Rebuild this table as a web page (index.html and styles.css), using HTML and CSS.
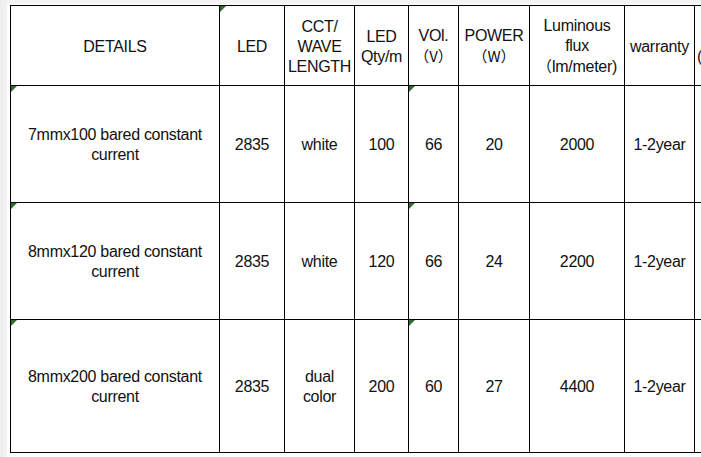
FILE: index.html
```html
<!DOCTYPE html>
<html>
<head>
<meta charset="utf-8">
<link rel="stylesheet" href="styles.css">
</head>
<body>
<div class="sheet">
  <table class="grid">
    <colgroup>
      <col class="c1"><col class="c2"><col class="c3"><col class="c4"><col class="c5"><col class="c6"><col class="c7"><col class="c8"><col class="c9">
    </colgroup>
    <tr class="head">
      <td>DETAILS</td>
      <td class="mark">LED</td>
      <td>CCT/<br>WAVE<br>LENGTH</td>
      <td>LED<br>Qty/m</td>
      <td>VOl.<br><span class="cjk">（V）</span></td>
      <td>POWER<br><span class="cjk">（W）</span></td>
      <td>Luminous<br>flux<br><span class="cjk">（</span>lm/meter)</td>
      <td>warranty</td>
      <td class="cut">&nbsp;<br>(</td>
    </tr>
    <tr class="r1">
      <td class="mark">7mmx100 bared constant current</td>
      <td>2835</td>
      <td>white</td>
      <td>100</td>
      <td class="mark">66</td>
      <td>20</td>
      <td>2000</td>
      <td>1-2year</td>
      <td></td>
    </tr>
    <tr class="r2">
      <td class="mark">8mmx120 bared constant current</td>
      <td>2835</td>
      <td>white</td>
      <td>120</td>
      <td class="mark">66</td>
      <td>24</td>
      <td>2200</td>
      <td>1-2year</td>
      <td></td>
    </tr>
    <tr class="r3">
      <td class="mark">8mmx200 bared constant current</td>
      <td>2835</td>
      <td>dual<br>color</td>
      <td>200</td>
      <td class="mark">60</td>
      <td>27</td>
      <td>4400</td>
      <td>1-2year</td>
      <td></td>
    </tr>
  </table>
</div>
</body>
</html>
```

FILE: styles.css
```css
html, body {
  margin: 0;
  padding: 0;
  background: #ffffff;
}

body {
  width: 701px;
  height: 457px;
  overflow: hidden;
}

.sheet {
  height: 457px;
  padding: 5px 0 0 10px;
  box-sizing: border-box;
  overflow: hidden;
  background:
    linear-gradient(to right, #eeeeee 0, #f2f2f2 7px, transparent 7px),
    linear-gradient(to bottom, #f4f4f4 0, #f4f4f4 4px, #ffffff 4px);
}

.grid {
  border-collapse: collapse;
  table-layout: fixed;
  width: 724px;
  font-family: "Liberation Sans", Arial, "Noto Sans CJK SC", sans-serif;
  font-size: 16px;
  line-height: 20px;
  color: #111111;
}

.grid td {
  border: 1px solid #000000;
  text-align: center;
  vertical-align: middle;
  padding: 2px 2px 0;
  position: relative;
  letter-spacing: -0.3px;
  white-space: normal;
}

.c1 { width: 209px; }
.c2 { width: 65px; }
.c3 { width: 70px; }
.c4 { width: 54px; }
.c5 { width: 50px; }
.c6 { width: 71px; }
.c7 { width: 95px; }
.c8 { width: 70px; }
.c9 { width: 40px; }

.head { height: 80px; }
.r1 { height: 117px; }
.r2 { height: 117px; }
.r3 { height: 133px; }

.grid tr.r1 td:first-child,
.grid tr.r2 td:first-child,
.grid tr.r3 td:first-child {
  padding: 2px 12px 0;
}

.cjk {
  font-family: "Noto Sans CJK SC", sans-serif;
  font-size: 15px;
  letter-spacing: 0;
}

.grid td.cut {
  text-align: left;
  padding-left: 2px;
}

.mark::before {
  content: "";
  position: absolute;
  left: 0;
  top: 0;
  width: 0;
  height: 0;
  border-top: 6px solid #2f6a2f;
  border-right: 6px solid transparent;
}
```
